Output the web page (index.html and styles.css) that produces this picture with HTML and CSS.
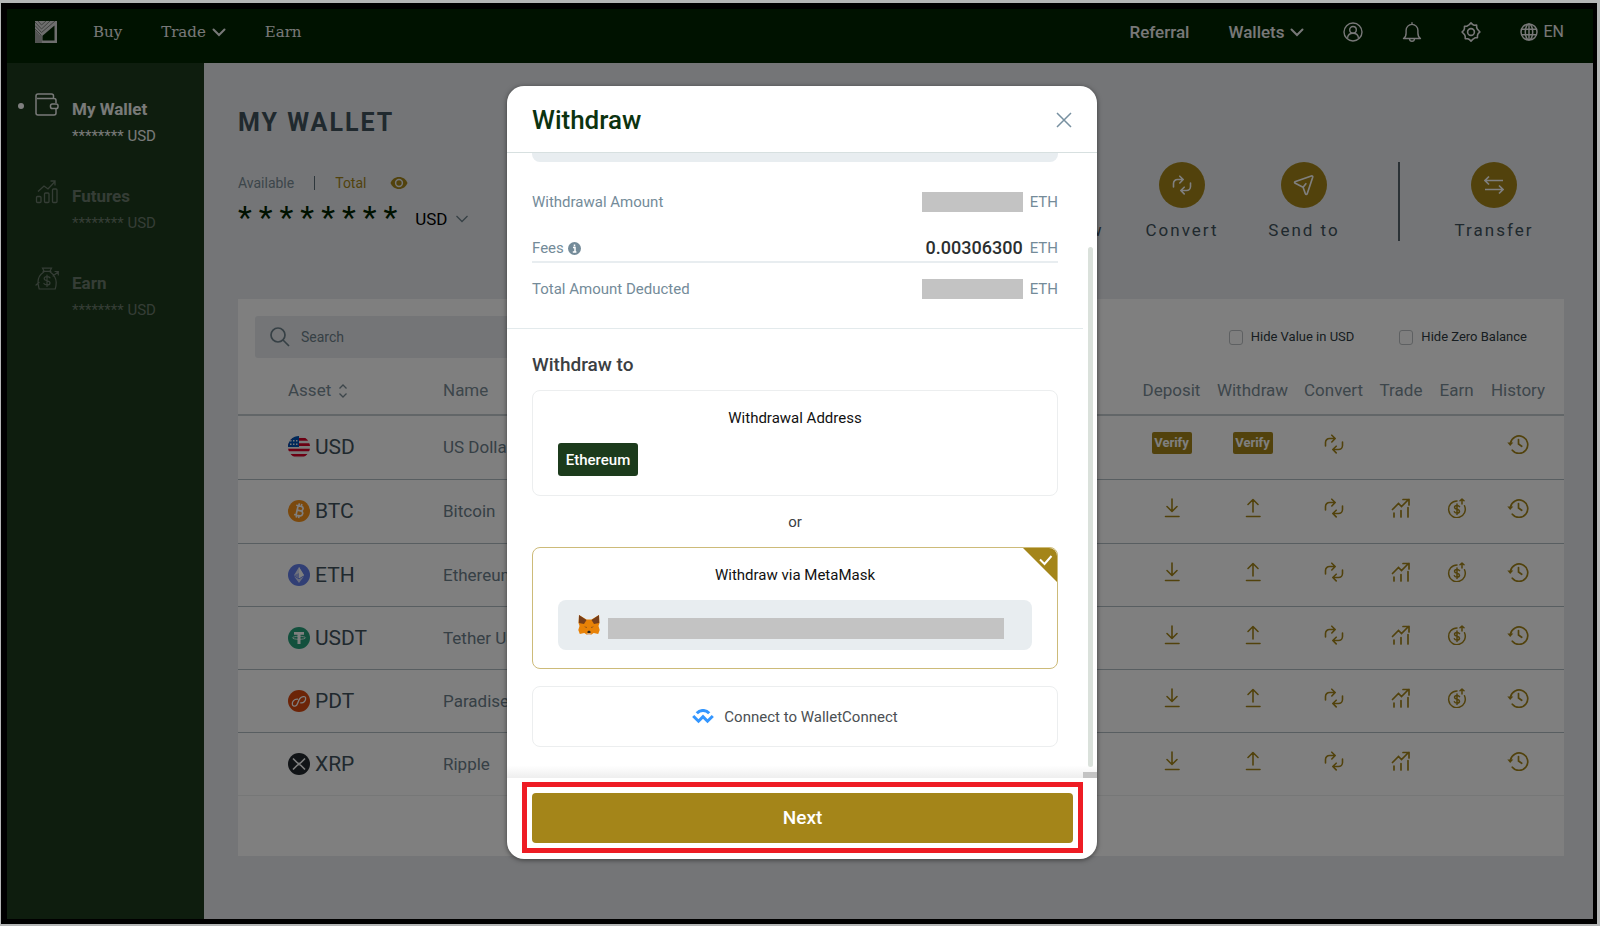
FILE: index.html
```html
<!DOCTYPE html>
<html lang="en">
<head>
<meta charset="utf-8">
<title>My Wallet - Withdraw</title>
<link rel="stylesheet" href="styles.css">
</head>
<body>
<svg class="sprite" aria-hidden="true">
  <symbol id="chev" viewBox="0 0 14 9"><path d="M1.5 1.5 7 7l5.500-5.500" fill="none" stroke="currentColor" stroke-width="2" stroke-linecap="round"/></symbol>
  <symbol id="convert" viewBox="0 0 20 20"><g fill="none" stroke="currentColor" stroke-width="1.600" stroke-linecap="round" stroke-linejoin="round"><path d="M1.500 12V8.500a4 4 0 0 1 4-4H11M7.800 1.200 11.200 4.500 7.800 8M18.500 8v3.500a4 4 0 0 1-4 4H9M12.200 12.200 8.800 15.500l3.400 3.400"/></g></symbol>
  <symbol id="down" viewBox="0 0 20 20"><path d="M10 1v12M5 8.500l5 5 5-5M3.500 18.500h13.500" fill="none" stroke="currentColor" stroke-width="1.600" stroke-linecap="round" stroke-linejoin="round"/></symbol>
  <symbol id="up" viewBox="0 0 20 20"><path d="M10 14V2M5 6.500l5-5 5 5M3.500 18.500h13.500" fill="none" stroke="currentColor" stroke-width="1.600" stroke-linecap="round" stroke-linejoin="round"/></symbol>
  <symbol id="trade" viewBox="0 0 20 20"><path d="M1.500 11.500 7.500 5.500 10.500 8.500 17.500 1.500M12 1.500h6V7M3 19v-4M10 19v-6.500M17 19V9.500" fill="none" stroke="currentColor" stroke-width="1.700" stroke-linecap="round"/></symbol>
  <symbol id="earn" viewBox="0 0 20 20"><g fill="none" stroke="currentColor" stroke-width="1.500" stroke-linecap="round" stroke-linejoin="round"><path d="M10 3a8.300 8.300 0 1 0 7.500 4.800M15 6V1M13 2.800 15 1l2 1.800M12.500 8.700c-.5-1-1.400-1.200-2.500-1.200-1.500 0-2.500.7-2.500 1.800 0 2.700 5 1.200 5 3.900 0 1.100-1 1.800-2.500 1.800-1.300 0-2.200-.4-2.600-1.300M10 6v10.500"/></g></symbol>
  <symbol id="history" viewBox="0 0 22 20"><path d="M3.500 9a8.700 8.700 0 1 1 1.800 7.200M11.500 5.500V10l3.200 2.300" fill="none" stroke="currentColor" stroke-width="1.700" stroke-linecap="round"/><path d="M.3 8.500h6L3.200 12z" fill="currentColor"/></symbol>
</svg>

<div class="frame">
  <header class="topbar">
    <a class="logo" href="#" aria-label="Home"><svg viewBox="0 0 22 22" width="22" height="22"><path d="M0 0h22v22H0z" fill="#dcdcdc"/><path d="M7.500 14.800 19.500 4.500v15h-12z" fill="#002400"/><path d="M0 1l6.500 7L15 0M0 4.500l6.500 7L20 0M3 0l3.500 4L11 0M0 8l6 6v8" fill="none" stroke="#7d827d" stroke-width="1"/><path d="M0 9l5.500 6v7H0z" fill="#a6a8a6"/></svg></a>
    <nav class="nav-left">
      <a href="#">Buy</a>
      <a href="#">Trade <svg width="14" height="9"><use href="#chev"/></svg></a>
      <a href="#">Earn</a>
    </nav>
    <nav class="nav-right">
      <a href="#">Referral</a>
      <a href="#">Wallets <svg width="14" height="9"><use href="#chev"/></svg></a>
      <button class="plain" aria-label="Account"><svg width="20" height="20" viewBox="0 0 20 20"><g fill="none" stroke="currentColor" stroke-width="1.400"><circle cx="10" cy="10" r="9"/><circle cx="10" cy="7.800" r="3.300"/><path d="M4.500 15.800c.4-3 2.300-4.600 5.500-4.600s5.100 1.600 5.500 4.600"/></g></svg></button>
      <button class="plain" aria-label="Notifications"><svg width="20" height="20" viewBox="0 0 20 20"><path d="M10 .8v1.400M1.500 16.500c2-1.200 2.600-3 2.600-5.500V8.300a5.900 5.900 0 0 1 11.800 0V11c0 2.500.6 4.300 2.600 5.500zM7.500 17c.3 3 4.700 3 5 0" fill="none" stroke="currentColor" stroke-width="1.400" stroke-linejoin="round" stroke-linecap="round"/></svg></button>
      <button class="plain" aria-label="Settings"><svg width="20" height="20" viewBox="0 0 20 20"><g fill="none" stroke="currentColor" stroke-width="1.600" stroke-linejoin="round"><circle cx="10" cy="10" r="3.400"/><path d="M8.300 2.600 10 .9l1.700 1.700 1.500.6 2.400-.1.100 2.500.6 1.400L18.900 10l-1.800 1.700-.6 1.500-.1 2.500-2.400.1-2.300 1.600L10 19.100l-1.700-1.700-1.500-.6-2.500-.1-.1-2.500-.6-1.500L1.100 10l1.700-1.700.6-1.500.1-2.500 2.500-.1z"/></g></svg></button>
      <button class="plain lang"><svg width="18" height="18" viewBox="0 0 18 18"><g fill="none" stroke="currentColor" stroke-width="1.500"><circle cx="9" cy="9" r="8"/><ellipse cx="9" cy="9" rx="3.700" ry="8"/><path d="M9 1v16M1.500 6.200h15M1.500 11.800h15"/></g></svg>EN</button>
    </nav>
  </header>

  <div class="shell">
    <aside class="sidebar">
      <a class="side-item active" href="#"><svg width="24" height="24" viewBox="0 0 24 24"><g fill="none" stroke="currentColor" stroke-width="1.500" stroke-linejoin="round"><path d="M21 10V7.500a2 2 0 0 0-2-2H2M18.500 5V3a2 2 0 0 0-2-2H3a2 2 0 0 0-2 2v17a2 2 0 0 0 2 2h16a2 2 0 0 0 2-2v-4"/><rect x="15.500" y="11" width="7.500" height="4.500" rx="1.800"/></g></svg><span><b>My Wallet</b><small>******** USD</small></span></a>
      <a class="side-item" href="#"><svg width="24" height="24" viewBox="0 0 24 24"><g fill="none" stroke="currentColor" stroke-width="1.300"><rect x="1.500" y="16.500" width="4.500" height="6" rx="1"/><rect x="9.500" y="13" width="4.500" height="9.500" rx="1"/><rect x="17.500" y="9" width="4.500" height="13.500" rx="1"/><path d="M3 11.500 9 6l4 3 7-7.500M15.500 1H20v4.500"/></g></svg><span><b>Futures</b><small>******** USD</small></span></a>
      <a class="side-item" href="#"><svg width="24" height="24" viewBox="0 0 24 24"><g fill="none" stroke="currentColor" stroke-width="1.200" stroke-linecap="round"><path d="M9 4 7.500 1.200h9L15 4M8 4.300h8M8.800 5C5 7.500 3 11 3 15c0 3 .5 4 1.200 7h16c1-3 1-4 1-6.500 0-4.500-2.500-8-6-10.500M1 18l3-2.500M18 9l5-4M20 4.500h3.300V8"/><path d="M15 10.800c-.6-.9-1.600-1.200-3-1.200-1.700 0-2.800.8-2.800 2 0 3 5.800 1.300 5.800 4.300 0 1.200-1.200 2-3 2-1.500 0-2.600-.5-3.100-1.400M12 8v11.500"/></g></svg><span><b>Earn</b><small>******** USD</small></span></a>
    </aside>

    <main class="main">
      <section class="overview">
        <div>
          <h1>MY WALLET</h1>
          <div class="tabs"><a href="#">Available</a><i></i><a class="gold" href="#">Total</a>
            <svg width="18" height="12" viewBox="0 0 18 12"><path d="M9 0C5 0 2 2.300.5 6 2 9.700 5 12 9 12s7-2.300 8.500-6C16 2.300 13 0 9 0z" fill="#a48519"/><circle cx="9" cy="6" r="3.400" fill="none" stroke="#e8ebee" stroke-width="1.500"/></svg></div>
          <div class="balance"><span>********</span><button class="plain">USD <svg width="12" height="8" viewBox="0 0 12 8"><path d="m.5 1 5.500 5.500L11.500 1" fill="none" stroke="#6d808b" stroke-width="1.300"/></svg></button></div>
        </div>
        <div class="actions">
          <button class="plain action"><span class="disc"><svg width="20" height="20"><use href="#up"/></svg></span>Withdraw</button>
          <button class="plain action"><span class="disc"><svg width="20" height="20"><use href="#convert"/></svg></span>Convert</button>
          <button class="plain action"><span class="disc"><svg width="22" height="22" viewBox="0 0 24 24"><path d="M2 8.500 20 2.200c1-.3 1.800.4 1.500 1.400L15.500 21.500c-.4 1-1.600 1-2 0L11 14.500 2.500 10.200c-.9-.5-1-1.300-.5-1.700zM11 14.500l3.500-4.500" fill="none" stroke="currentColor" stroke-width="1.800" stroke-linejoin="round"/></svg></span>Send to</button>
          <i class="rule"></i>
          <button class="plain action"><span class="disc"><svg width="20" height="20" viewBox="0 0 20 20"><path d="M19 5.500H1.500M5 1.500 1 5.500l4 4M1 14.500h17.500M15 10.500l4 4-4 4" fill="none" stroke="currentColor" stroke-width="1.700"/></svg></span>Transfer</button>
        </div>
      </section>

      <section class="card">
        <div class="filters">
          <label class="search"><svg width="20" height="20" viewBox="0 0 20 20"><path d="M13 13l6 6M15 8A7 7 0 1 1 1 8a7 7 0 0 1 14 0z" fill="none" stroke="#6d808b" stroke-width="1.700"/></svg><input type="text" placeholder="Search" aria-label="Search"></label>
          <div class="checks">
            <label><input type="checkbox">Hide Value in USD</label>
            <label><input type="checkbox">Hide Zero Balance</label>
          </div>
        </div>
        <table>
          <colgroup><col class="c-asset"><col><col class="c-80"><col class="c-80"><col class="c-80"><col class="c-trade"><col class="c-earn"><col class="c-last"></colgroup>
          <thead><tr><th>Asset <svg width="10" height="14" viewBox="0 0 10 14"><path d="M1.500 4.500 5 1l3.500 3.500M1.500 9.500 5 13l3.500-3.500" fill="none" stroke="currentColor" stroke-width="1.300"/></svg></th><th>Name</th><th>Deposit</th><th>Withdraw</th><th>Convert</th><th>Trade</th><th>Earn</th><th>History</th></tr></thead>
          <tbody>
            <tr><td><span class="coin"><svg viewBox="0 0 22 22"><defs><clipPath id="cp"><circle cx="11" cy="11" r="11"/></clipPath></defs><g clip-path="url(#cp)"><path d="M0 0h22v22H0z" fill="#f4f4f4"/><path d="M0 2h22v2.700H0zM0 7.300h22V10H0zM0 12.700h22v2.600H0zM0 18h22v2.500H0z" fill="#d80027"/><path d="M0 0h11v11H0z" fill="#0052b4"/><path d="M2 4h1.500v1.500H2zM5 4h1.500v1.500H5zM8 4h1.500v1.500H8zM2 7.500h1.500V9H2zM5 7.500h1.500V9H5zM8 7.500h1.500V9H8z" fill="#eee"/></g></svg>USD</span></td><td>US Dollar</td><td><button class="verify">Verify</button></td><td><button class="verify">Verify</button></td><td><svg><use href="#convert"/></svg></td><td></td><td></td><td><svg><use href="#history"/></svg></td></tr>
            <tr><td><span class="coin"><svg viewBox="0 0 22 22"><circle cx="11" cy="11" r="11" fill="#f7931a"/><g transform="rotate(13 11 11)" fill="none" stroke="#fff" stroke-width="1.700"><path d="M7 6h5.200c3 0 3 4.500 0 4.500H9M9 10.500h3.700c3.300 0 3.300 5 0 5H7M9 6v9.500M9.700 3.500V6M12.200 3.500V6M9.700 15.500V18M12.200 15.500V18"/></g></svg>BTC</span></td><td>Bitcoin</td><td><svg><use href="#down"/></svg></td><td><svg><use href="#up"/></svg></td><td><svg><use href="#convert"/></svg></td><td><svg><use href="#trade"/></svg></td><td><svg><use href="#earn"/></svg></td><td><svg><use href="#history"/></svg></td></tr>
            <tr><td><span class="coin"><svg viewBox="0 0 22 22"><circle cx="11" cy="11" r="11" fill="#627eea"/><path d="m11 3 5 8.200-5 3-5-3z" fill="#dfe5fb"/><path d="m11 3 5 8.200-5 3z" fill="#fff"/><path d="m6 12.300 5 3 5-3L11 19z" fill="#d0d8f9"/><path d="m6 11.200 5-2.200v5.200z" fill="#a0b1f2"/></svg>ETH</span></td><td>Ethereum</td><td><svg><use href="#down"/></svg></td><td><svg><use href="#up"/></svg></td><td><svg><use href="#convert"/></svg></td><td><svg><use href="#trade"/></svg></td><td><svg><use href="#earn"/></svg></td><td><svg><use href="#history"/></svg></td></tr>
            <tr><td><span class="coin"><svg viewBox="0 0 22 22"><circle cx="11" cy="11" r="11" fill="#26a17b"/><path d="M6 5h10v2.800h-3.500V17h-3V7.800H6z" fill="#fff"/><ellipse cx="11" cy="10.800" rx="6.500" ry="1.500" fill="none" stroke="#fff" stroke-width=".8"/></svg>USDT</span></td><td>Tether USD</td><td><svg><use href="#down"/></svg></td><td><svg><use href="#up"/></svg></td><td><svg><use href="#convert"/></svg></td><td><svg><use href="#trade"/></svg></td><td><svg><use href="#earn"/></svg></td><td><svg><use href="#history"/></svg></td></tr>
            <tr><td><span class="coin"><svg viewBox="0 0 22 22"><circle cx="11" cy="11" r="11" fill="#d9480f"/><path d="M9.500 9.200C6 9 4.200 11.500 4.300 14c.1 2.300 2.800 2.800 4.300 1.200 1.400-1.500 1.700-4.700 3.300-6.700 1.500-1.900 5.300-3 5.700-.6.400 2.700-1.700 5.300-4.900 5" fill="none" stroke="#fff" stroke-width="1.300" stroke-linecap="round"/></svg>PDT</span></td><td>ParadiseFi</td><td><svg><use href="#down"/></svg></td><td><svg><use href="#up"/></svg></td><td><svg><use href="#convert"/></svg></td><td><svg><use href="#trade"/></svg></td><td><svg><use href="#earn"/></svg></td><td><svg><use href="#history"/></svg></td></tr>
            <tr><td><span class="coin"><svg viewBox="0 0 22 22"><circle cx="11" cy="11" r="11" fill="#23292f"/><path d="m5 5.500 4 4c1.200 1.200 2.800 1.200 4 0l4-4M5 16.500l4-4c1.200-1.200 2.800-1.200 4 0l4 4" fill="none" stroke="#fff" stroke-width="1.600"/></svg>XRP</span></td><td>Ripple</td><td><svg><use href="#down"/></svg></td><td><svg><use href="#up"/></svg></td><td><svg><use href="#convert"/></svg></td><td><svg><use href="#trade"/></svg></td><td></td><td><svg><use href="#history"/></svg></td></tr>
          </tbody>
        </table>
      </section>
    </main>
  </div>

  <div class="overlay">
    <section class="modal" role="dialog" aria-labelledby="dlg-title">
      <header class="modal-head"><h2 id="dlg-title">Withdraw</h2><button class="plain" aria-label="Close"><svg width="16" height="16" viewBox="0 0 16 16"><path d="m1 1 14 14M15 1 1 15" fill="none" stroke="#7790a0" stroke-width="1.500"/></svg></button></header>
      <div class="modal-body">
        <div class="content">
          <div class="summary">
            <div class="field-end"></div>
            <div class="row"><span>Withdrawal Amount</span><i class="mask"></i><span>ETH</span></div>
            <div class="row fees"><span>Fees <svg width="13" height="13" viewBox="0 0 13 13"><circle cx="6.500" cy="6.500" r="6.500" fill="#748b99"/><path d="M5 5.500h2v4.300M4.800 10h3.600M6.500 2.400v1.800" fill="none" stroke="#fff" stroke-width="1.500"/></svg></span><strong>0.00306300</strong><span>ETH</span></div>
            <div class="row total"><span>Total Amount Deducted</span><i class="mask"></i><span>ETH</span></div>
          </div>
          <div class="targets">
            <h3>Withdraw to</h3>
            <div class="option address"><p>Withdrawal Address</p><button class="network">Ethereum</button></div>
            <p class="or">or</p>
            <div class="option metamask"><p>Withdraw via MetaMask</p>
              <svg class="corner" width="34" height="34" viewBox="0 0 34 34"><path d="M0 0h26a8 8 0 0 1 8 8v26z" fill="#a48519"/><path d="m17 11.500 4.500 4.500L28.500 8" fill="none" stroke="#fff" stroke-width="2"/></svg>
              <div class="account"><svg width="22" height="20" viewBox="0 0 22 20"><path d="M1 0l7.500 4.500h5L21 0l.5 8-1 3 1.200 4-1.500 4-4.500-1-3 2H9.300l-3-2-4.500 1-1.500-4 1.200-4-1-3z" fill="#e88207"/><path d="M1 0l7.500 5L6 9 .8 8zM21 0l-7.500 5L16 9l5.200-1z" fill="#763e1a"/><path d="M6 11.500l3 .5-.5 1zM16 11.500l-3 .5.5 1z" fill="#7a4a1e"/><path d="m9.500 16.500.8-.8h1.400l.8.800v1.500h-3z" fill="#222"/><path d="M8.500 18.500h5l-1 1.500h-3z" fill="#d7c1b3"/></svg><i class="mask"></i></div>
            </div>
            <button class="option connect"><svg width="22" height="15" viewBox="0 0 22 15"><path d="M4.800 4.300c3.400-3.800 9-3.800 12.400 0M1.200 7l5.300 5.200L11 7.700l4.500 4.500L20.800 7" fill="none" stroke="#3396ff" stroke-width="3"/></svg>Connect to WalletConnect</button>
          </div>
        </div>
        <div class="track"><i class="thumb"></i><i class="track-end"></i></div>
      </div>
      <footer class="modal-foot"><div class="highlight"><button class="next">Next</button></div></footer>
    </section>
  </div>
</div>
</body>
</html>
```
FILE: styles.css
```css
* { box-sizing: border-box; }
html, body { height: 100%; }
body {
  margin: 0;
  padding: 3px 3px 2px 1px;
  background: #b4b6b6;
  font-family: Roboto, "Noto Sans", sans-serif;
  font-size: 15px;
  line-height: 20px;
  color: #2f3b42;
}
h1, h2, h3, p { margin: 0; }
a { color: inherit; text-decoration: none; }
button, input { font: inherit; color: inherit; }
svg { flex: none; }
.sprite { position: absolute; width: 0; height: 0; }
.plain { border: 0; padding: 0; background: none; display: flex; align-items: center; }

.frame {
  position: relative;
  min-height: 100%;
  display: flex;
  flex-direction: column;
  border: solid #000;
  border-width: 6px 4px 5px 6px;
}

/* Top bar */
.topbar {
  display: flex;
  align-items: center;
  height: 54px;
  padding: 0 29px 8px 28px;
  background: #002400;
  color: #f0f0f0;
}
.logo { display: flex; }
.topbar nav { display: flex; align-items: center; }
.topbar nav a { display: flex; align-items: center; gap: 6px; }
.nav-left { gap: 39px; margin-left: 36px; font-family: "DejaVu Serif", serif; }
.nav-right { gap: 39px; margin-left: auto; font-weight: 500; }
.nav-right a { font-size: 17px; }
.lang { gap: 5px; font-size: 16px; font-weight: 400; }

/* Sidebar */
.shell { flex: 1; display: flex; }
.sidebar {
  width: 197px;
  flex: none;
  padding: 30px 0 0 28px;
  display: flex;
  flex-direction: column;
  gap: 37px;
  background: #1c3b1c;
}
.side-item { position: relative; display: flex; gap: 13px; height: 50px; color: #6b7b6c; }
.side-item.active { color: #f2f4f2; }
.side-item.active::before {
  content: "";
  position: absolute;
  left: -17px;
  top: 10px;
  width: 6px;
  height: 6px;
  border-radius: 50%;
  background: #fff;
}
.side-item b { display: block; padding-top: 5px; font-size: 17px; line-height: 22px; }
.side-item small { display: block; padding-top: 7px; font-size: 15px; line-height: 18px; }

/* Overview */
.main { flex: 1; min-width: 0; padding: 0 29px 63px 34px; background: #e8ebee; }
.overview { display: flex; justify-content: space-between; height: 236px; }
h1 { padding-top: 43px; font-size: 25px; line-height: 34px; font-weight: 700; letter-spacing: 2px; color: #41525c; }
.tabs { display: flex; align-items: center; margin-top: 33px; font-size: 14px; color: #7a8c96; }
.tabs i { width: 1px; height: 14px; margin: 0 20px; background: #5d6f79; }
.gold { color: #a48519; }
.tabs svg { margin-left: 24px; }
.balance { display: flex; align-items: flex-start; gap: 11px; margin-top: 4px; color: #002400; }
.balance span { font-size: 32px; line-height: 40px; letter-spacing: 7px; }
.balance button { gap: 8px; margin-top: 8px; height: 28px; font-size: 17px; color: #000; }
.actions { display: flex; padding: 99px 23px 0 0; }
.action {
  flex-direction: column;
  gap: 12px;
  width: 122px;
  height: 80px;
  font-size: 17px;
  letter-spacing: 2px;
  color: #41525c;
}
.action:last-child { width: 94px; }
.disc {
  width: 46px;
  height: 46px;
  border-radius: 50%;
  display: flex;
  align-items: center;
  justify-content: center;
  background: #a48519;
  color: #fff;
}
.rule { width: 2px; height: 79px; margin: 0 47px 0 33px; background: #55636b; }

/* Asset card */
.card { background: #fff; padding: 17px 0 60px; }
.filters { display: flex; justify-content: space-between; padding: 0 37px 0 17px; }
.search {
  width: 400px;
  height: 42px;
  padding-left: 15px;
  display: flex;
  align-items: center;
  gap: 9px;
  border-radius: 3px;
  background: #e8ebee;
}
.search input { flex: 1; min-width: 0; border: 0; background: none; outline: 0; font-size: 14px; }
.search input::placeholder { color: #6d808b; opacity: 1; }
.checks { display: flex; align-items: center; gap: 45px; font-size: 13px; }
.checks label { display: flex; align-items: center; gap: 8px; }
.checks input {
  appearance: none;
  width: 14px;
  height: 15px;
  margin: 0;
  border: 1px solid #bcc1c4;
  border-radius: 3px;
}
table { width: 100%; table-layout: fixed; border-collapse: collapse; }
.c-asset { width: 205px; }
.c-80 { width: 81px; }
.c-trade { width: 54px; }
.c-earn { width: 57px; }
.c-last { width: 79px; }
th {
  height: 57px;
  padding: 8px 0 0;
  font-size: 17px;
  font-weight: 400;
  color: #7a8c96;
  border-bottom: 2px solid #c4cdd1;
}
th:nth-child(-n+2), td:nth-child(-n+2) { text-align: left; }
th:first-child { padding-left: 50px; }
th svg { margin-left: 3px; vertical-align: -2px; }
th:last-child, td:last-child { padding-right: 13px; }
td { height: 63px; padding: 0; text-align: center; color: #a48519; border-bottom: 1px solid #b0bcc2; }
tbody tr:first-child td, tbody tr:nth-child(2) td { height: 64px; }
tbody tr:last-child td { border-color: #eceeee; }
td:nth-child(2) { font-size: 17px; color: #6d808b; }
td:first-child { padding-left: 50px; }
td svg { width: 20px; height: 20px; margin-bottom: 6px; vertical-align: middle; }
td:last-child svg { width: 22px; }
.coin { display: flex; align-items: center; gap: 5px; font-size: 21px; line-height: 24px; color: #41525c; }
.coin svg { width: 22px; height: 22px; margin: 0; }
.verify {
  height: 22px;
  width: 40px;
  margin-bottom: 8px;
  padding: 0;
  border: 0;
  border-radius: 2px;
  background: #a48519;
  color: #fff;
  font-size: 13px;
  font-weight: 700;
}

/* Withdraw dialog */
.overlay {
  position: absolute;
  inset: 0;
  display: flex;
  align-items: flex-start;
  justify-content: center;
  padding: 77px 0 0 4px;
  background: rgba(0, 0, 0, 0.5);
}
.modal {
  width: 590px;
  border-radius: 17px;
  overflow: hidden;
  background: #fff;
  box-shadow: 0 1px 5px rgba(0, 0, 0, 0.5);
}
.modal-head {
  display: flex;
  align-items: center;
  justify-content: space-between;
  height: 67px;
  padding: 1px 25px 0;
  border-bottom: 1px solid #d7e0e0;
}
h2 { font-size: 26px; line-height: 32px; font-weight: 500; color: #0c330f; }
.modal-body { display: flex; background: linear-gradient(#fff 98%, #eee); }
.content { flex: 1; padding-bottom: 31px; }
.summary { padding: 0 25px 21px; border-bottom: 1px solid #e3eaec; }
.field-end { height: 9px; border-radius: 0 0 8px 8px; background: #e8edf0; }
.row { display: flex; align-items: center; gap: 7px; height: 36px; color: #748b99; }
.row span:first-child { margin-right: auto; }
.row .mask { width: 101px; height: 20px; }
.summary .row:nth-child(2) { margin-top: 22px; }
.fees { margin-top: 14px; height: 29px; border-bottom: 2px solid #e8edf0; }
.fees svg { vertical-align: -2px; }
.fees strong { font-size: 18px; font-weight: 500; color: #2b2f30; }
.total { margin-top: 8px; }
.mask { background: #c3c3c3; }
.targets { padding: 25px 25px 0; }
h3 { font-size: 19px; line-height: 22px; font-weight: 500; color: #3b4043; }
.option { border: 1px solid #eceeef; border-radius: 8px; background: #fff; color: #111; }
.option p { text-align: center; }
.address { height: 106px; margin-top: 14px; padding: 17px 25px; }
.network {
  display: block;
  width: 80px;
  height: 33px;
  margin-top: 15px;
  padding: 0;
  border: 0;
  border-radius: 3px;
  background: #1c3b1c;
  color: #fff;
  font-weight: 500;
}
.or { margin: 16px 0 15px; text-align: center; color: #3b4043; }
.metamask { position: relative; padding: 17px 25px 18px; border-color: #cdbb79; }
.corner { position: absolute; top: 0; right: 0; }
.account {
  display: flex;
  align-items: center;
  gap: 8px;
  height: 50px;
  margin-top: 15px;
  padding: 0 28px 0 20px;
  border-radius: 8px;
  background: #e8edf0;
}
.account .mask { flex: 1; height: 21px; margin-top: 6px; }
.connect {
  display: flex;
  align-items: center;
  justify-content: center;
  gap: 10px;
  width: 100%;
  height: 61px;
  margin-top: 17px;
  color: #4b5053;
}
.track { width: 14px; display: flex; flex-direction: column; align-items: center; padding-top: 94px; }
.thumb { flex: 1; width: 5px; border-radius: 3px; background: #dae1db; }
.track-end { align-self: stretch; height: 6px; margin-top: 5px; background: #c3c3c3; }
.modal-foot { padding: 4px 14px 6px 15px; }
.highlight { padding: 6px 5px 5px; border: 5px solid #ee1c24; }
.next {
  display: block;
  width: 100%;
  height: 50px;
  border: 0;
  border-radius: 4px;
  background: #a48519;
  color: #fff;
  font-size: 19px;
  font-weight: 500;
}
```
